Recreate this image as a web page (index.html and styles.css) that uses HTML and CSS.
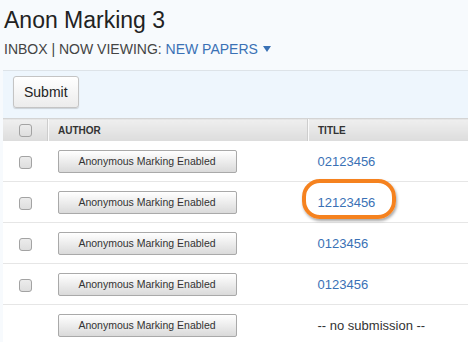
FILE: index.html
```html
<!DOCTYPE html>
<html lang="en">

<head>
    <meta charset="UTF-8">
    <meta name="viewport" content="width=device-width, initial-scale=1.0">
    <title>Anon Marking 3</title>
    <link rel="stylesheet" href="styles.css">
</head>

<body>
    <div class="page">
        <h1 class="title">Anon Marking 3</h1>
        <div class="crumbs">
            INBOX <span class="sep">|</span> NOW VIEWING: <a class="viewing" href="#">NEW PAPERS <span class="caret"></span></a>
        </div>

        <div class="toolbar">
            <button class="btn">Submit</button>
        </div>

        <table class="inbox">
            <thead>
                <tr>
                    <th class="col-check"><input type="checkbox" class="check"></th>
                    <th class="col-author">AUTHOR</th>
                    <th class="col-title">TITLE</th>
                </tr>
            </thead>
            <tbody>
                <tr>
                    <td class="col-check"><input type="checkbox" class="check"></td>
                    <td class="col-author"><button class="anon">Anonymous Marking Enabled</button></td>
                    <td class="col-title"><a href="#">02123456</a></td>
                </tr>
                <tr>
                    <td class="col-check"><input type="checkbox" class="check"></td>
                    <td class="col-author"><button class="anon">Anonymous Marking Enabled</button></td>
                    <td class="col-title"><span class="highlight"></span><a href="#">12123456</a></td>
                </tr>
                <tr>
                    <td class="col-check"><input type="checkbox" class="check"></td>
                    <td class="col-author"><button class="anon">Anonymous Marking Enabled</button></td>
                    <td class="col-title"><a href="#">0123456</a></td>
                </tr>
                <tr>
                    <td class="col-check"><input type="checkbox" class="check"></td>
                    <td class="col-author"><button class="anon">Anonymous Marking Enabled</button></td>
                    <td class="col-title"><a href="#">0123456</a></td>
                </tr>
                <tr>
                    <td class="col-check"></td>
                    <td class="col-author"><button class="anon">Anonymous Marking Enabled</button></td>
                    <td class="col-title none">-- no submission --</td>
                </tr>
            </tbody>
        </table>
    </div>
</body>

</html>
```

FILE: styles.css
```css
body {
    margin: 0;
    background: #f7fafd;
    font-family: "Liberation Sans", Arial, sans-serif;
    color: #333;
    overflow: hidden;
}

a {
    color: #3a71b5;
    text-decoration: none;
}

.page {
    padding-left: 3px;
}


/* 页头 */

.title {
    margin: 7px 0 0 1px;
    font-size: 23px;
    font-weight: normal;
    line-height: 26px;
    color: #222;
}

.crumbs {
    margin: 8px 0 0 1px;
    font-size: 14px;
    line-height: 17px;
    color: #444;
}

.crumbs .caret {
    display: inline-block;
    width: 0;
    height: 0;
    margin-left: 1px;
    vertical-align: 2px;
    border-left: 4px solid transparent;
    border-right: 4px solid transparent;
    border-top: 6px solid #3a71b5;
}


/* 工具栏 */

.toolbar {
    margin-top: 12px;
    padding: 5px 0 10px 10px;
    background: #eef6fd;
    border-top: 1px solid #dde3e8;
}

.btn {
    height: 32px;
    padding: 0 10px;
    font-family: inherit;
    font-size: 14px;
    color: #222;
    background: linear-gradient(#ffffff, #ececec);
    border: 1px solid #c4c4c4;
    border-radius: 3px;
    box-shadow: 0 1px 1px rgba(0, 0, 0, 0.15);
}


/* 表格 */

.inbox {
    width: 100%;
    border-collapse: collapse;
    background: #fff;
}

.inbox th {
    height: 22px;
    padding: 0;
    font-size: 10px;
    font-weight: bold;
    text-align: left;
    color: #333;
    background: linear-gradient(#efefef, #dcdcdc);
    border-top: 1px solid #d4d4d4;
}

.inbox th + th {
    border-left: 1px solid #cdcdcd;
    box-shadow: inset 1px 0 0 #fafafa;
}

.inbox td {
    height: 40px;
    padding: 0;
    border-bottom: 1px solid #e6e6e6;
    font-size: 13px;
}

.inbox .col-check {
    width: 44px;
    text-align: center;
}

.inbox .col-author {
    width: 249px;
    padding-left: 10px;
}

.inbox .col-title {
    position: relative;
    padding-left: 10px;
}

.inbox .none {
    color: #333;
}

.check {
    -webkit-appearance: none;
    appearance: none;
    display: inline-block;
    width: 13px;
    height: 13px;
    margin: 0 0 0 1px;
    vertical-align: middle;
    background: linear-gradient(#ececec, #dedede);
    border: 1px solid #a3a3a3;
    border-radius: 3px;
}

.anon {
    width: 179px;
    height: 23px;
    padding: 0;
    font-family: inherit;
    font-size: 10.5px;
    color: #333;
    background: linear-gradient(#ffffff, #dadada);
    border: 1px solid #a9a9a9;
    border-radius: 2px;
    vertical-align: middle;
}


/* 高亮圈 */

.highlight {
    position: absolute;
    left: -6px;
    top: -3px;
    width: 94px;
    height: 40px;
    box-sizing: border-box;
    border: 4px solid #f5821f;
    border-radius: 18px;
    box-shadow: 1px 2px 3px rgba(0, 0, 0, 0.35);
}
```
